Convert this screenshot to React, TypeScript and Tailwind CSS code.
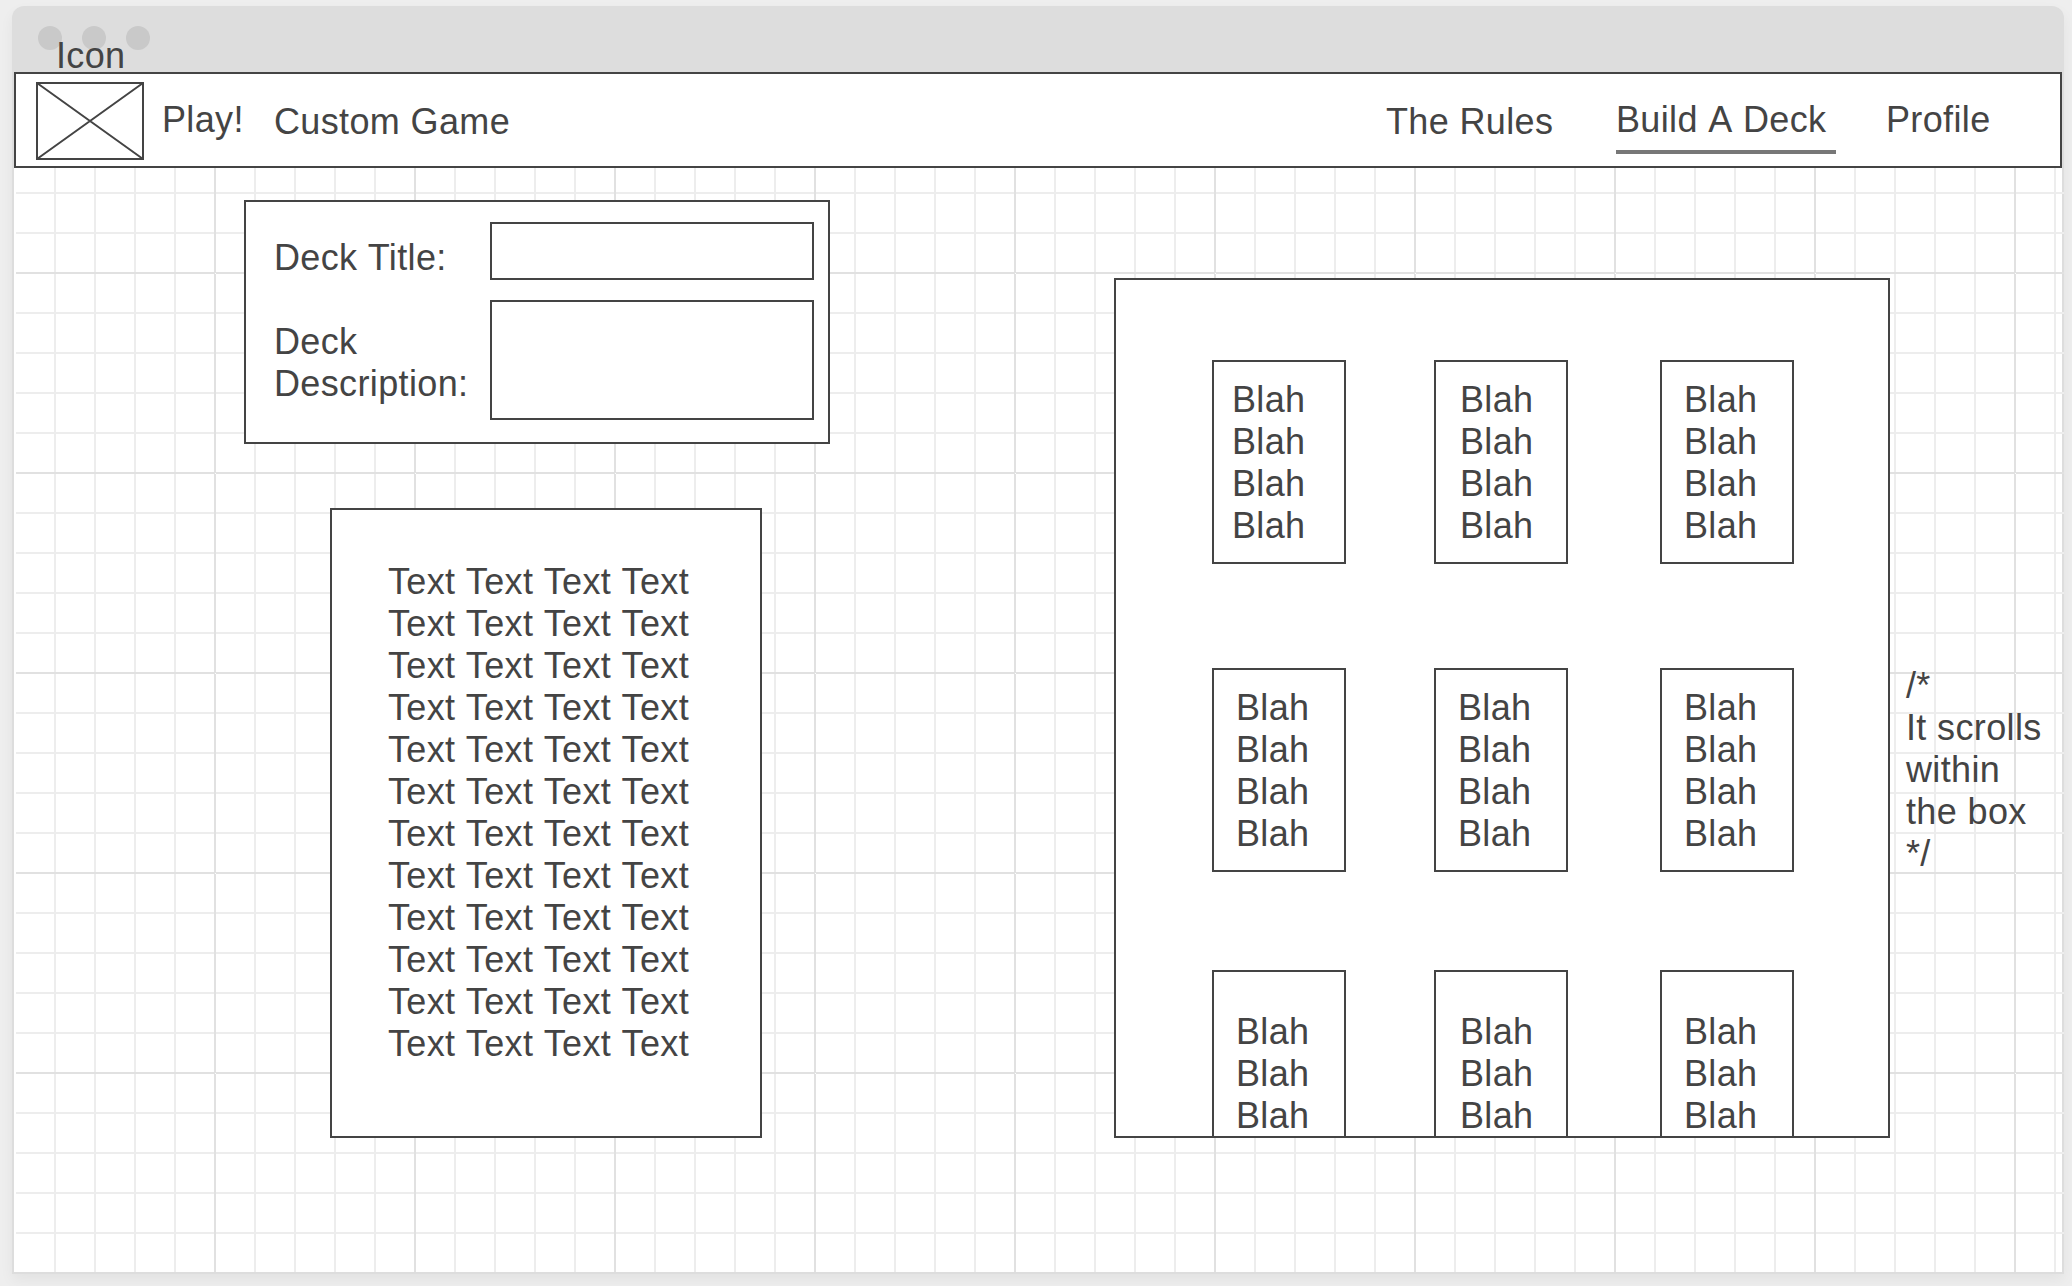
import React from "react";

const GRID =
  "bg-[conic-gradient(from_270deg_at_1px_1px,#fff_90deg,transparent_0),linear-gradient(to_right,#e1e1e1_2px,transparent_2px),linear-gradient(to_bottom,#e1e1e1_2px,transparent_2px),linear-gradient(to_right,#ededed_2px,transparent_2px),linear-gradient(to_bottom,#ededed_2px,transparent_2px),linear-gradient(#dddddd,#dddddd)] bg-size-[200px_200px,200px_200px,200px_200px,40px_40px,40px_40px,2px_100%] bg-position-[199px_105px,198px_0px,0px_104px,38px_0px,0px_24px,right_top] [background-repeat:repeat,repeat,repeat,repeat,repeat,no-repeat]";

const TEXT_LINES = Array.from({ length: 12 }, () => "Text Text Text Text");

type CardRow = { top: string; lines: number; pads: string[] };

const CARD_ROWS: CardRow[] = [
  { top: "pt-[17px]", lines: 4, pads: ["pl-[18px]", "pl-6", "pl-[22px]"] },
  { top: "pt-[17px]", lines: 4, pads: ["pl-[22px]", "pl-[22px]", "pl-[22px]"] },
  { top: "pt-[39px]", lines: 3, pads: ["pl-[22px]", "pl-6", "pl-[22px]"] },
];

/* Sets each word on its own so that no kerning applies across the spaces. */
function Words({ text }: { text: string }) {
  return (
    <>
      {text.split(" ").map((word, i) => (
        <React.Fragment key={i}>
          {i > 0 && " "}
          <span className="inline-block">{word}</span>
        </React.Fragment>
      ))}
    </>
  );
}

function TitleBar() {
  return (
    <div className="flex h-[66px] items-start gap-5 rounded-t-xl bg-[#dddddd] pl-[26px] pt-5">
      <span className="size-6 rounded-full bg-[#c9c9c9]" />
      <span className="size-6 rounded-full bg-[#c9c9c9]" />
      <span className="size-6 rounded-full bg-[#c9c9c9]" />
    </div>
  );
}

function NavBar() {
  return (
    <nav className="flex h-24 items-start border-2 border-[#444444] bg-white">
      <div className="relative ml-5 mt-2 h-[78px] w-[108px]">
        <svg className="block" width="108" height="78" viewBox="0 0 108 78" fill="none" stroke="#444444" strokeWidth="2">
          <rect x="1" y="1" width="106" height="76" />
          <path d="M1 1 107 77M107 1 1 77" />
        </svg>
        <span className="absolute left-5 top-[-47px]">Icon</span>
      </div>
      <a className="ml-[18px] mt-[25px] w-28">Play!</a>
      <a className="mt-[27px]">
        <Words text="Custom Game" />
      </a>
      <div className="ml-auto mr-[68px] flex items-start">
        <a className="mt-[27px] w-[230px]">
          <Words text="The Rules" />
        </a>
        <a className="mr-[50px] mt-[25px] h-[55px] w-[220px] border-b-4 border-[#777777]">
          <Words text="Build A Deck" />
        </a>
        <a className="mt-[25px] w-[106px]">Profile</a>
      </div>
    </nav>
  );
}

function DeckForm() {
  return (
    <form className="flex h-[244px] w-[586px] justify-between border-2 border-[#444444] bg-white pl-7 pr-3.5 pt-5">
      <div className="flex flex-col gap-[42px] pt-[15px]">
        <div>
          <Words text="Deck Title:" />
        </div>
        <div>
          Deck
          <br />
          Description:
        </div>
      </div>
      <div className="flex flex-col gap-5">
        <div className="h-[58px] w-[324px] border-2 border-[#444444]" />
        <div className="h-[120px] w-[324px] border-2 border-[#444444]" />
      </div>
    </form>
  );
}

function Card({ lines, pad, top }: { lines: number; pad: string; top: string }) {
  return (
    <div className={`h-[204px] border-2 border-[#444444] ${pad} ${top}`}>
      {Array.from({ length: lines }, (_, i) => (
        <div key={i}>Blah</div>
      ))}
    </div>
  );
}

function CardBox() {
  return (
    <section className="mt-[78px] h-[860px] w-[776px] overflow-hidden border-2 border-[#444444] bg-white pl-24 pt-20">
      <div className="grid grid-cols-[222px_226px_134px] grid-rows-[308px_302px_204px]">
        {CARD_ROWS.map((row, r) =>
          row.pads.map((pad, c) => (
            <div key={`${r}-${c}`} className="w-[134px]">
              <Card lines={row.lines} pad={pad} top={row.top} />
            </div>
          ))
        )}
      </div>
    </section>
  );
}

export default function App() {
  return (
    <div className="h-[1286px] w-[2072px] overflow-hidden bg-[#eeeeee] px-3 pt-1.5 font-['Liberation_Sans',Arial,sans-serif] text-[36px] leading-[42px] tracking-[0.36px] whitespace-nowrap text-[#444444]">
      <div className="w-[2052px] rounded-t-xl shadow-[0_6px_14px_rgba(0,0,0,0.05)]">
        <TitleBar />
        <div className="bg-[#dddddd] px-0.5">
          <NavBar />
        </div>
        <div className="h-[1106px] border-b-2 border-l-2 border-[#dddddd] bg-white pl-0.5">
          <main className={`flex h-full pt-8 ${GRID}`}>
            <div className="ml-[228px] flex w-[870px] flex-col gap-16">
              <DeckForm />
              <section className="ml-[86px] h-[630px] w-[432px] border-2 border-[#444444] bg-white pl-14 pt-[51px]">
                {TEXT_LINES.map((line, i) => (
                  <div key={i}>
                    <Words text={line} />
                  </div>
                ))}
              </section>
            </div>
            <CardBox />
            <aside className="ml-4 mt-[465px]">
              /*
              <br />
              <Words text="It scrolls" />
              <br />
              within
              <br />
              <Words text="the box" />
              <br />
              */
            </aside>
          </main>
        </div>
      </div>
    </div>
  );
}
